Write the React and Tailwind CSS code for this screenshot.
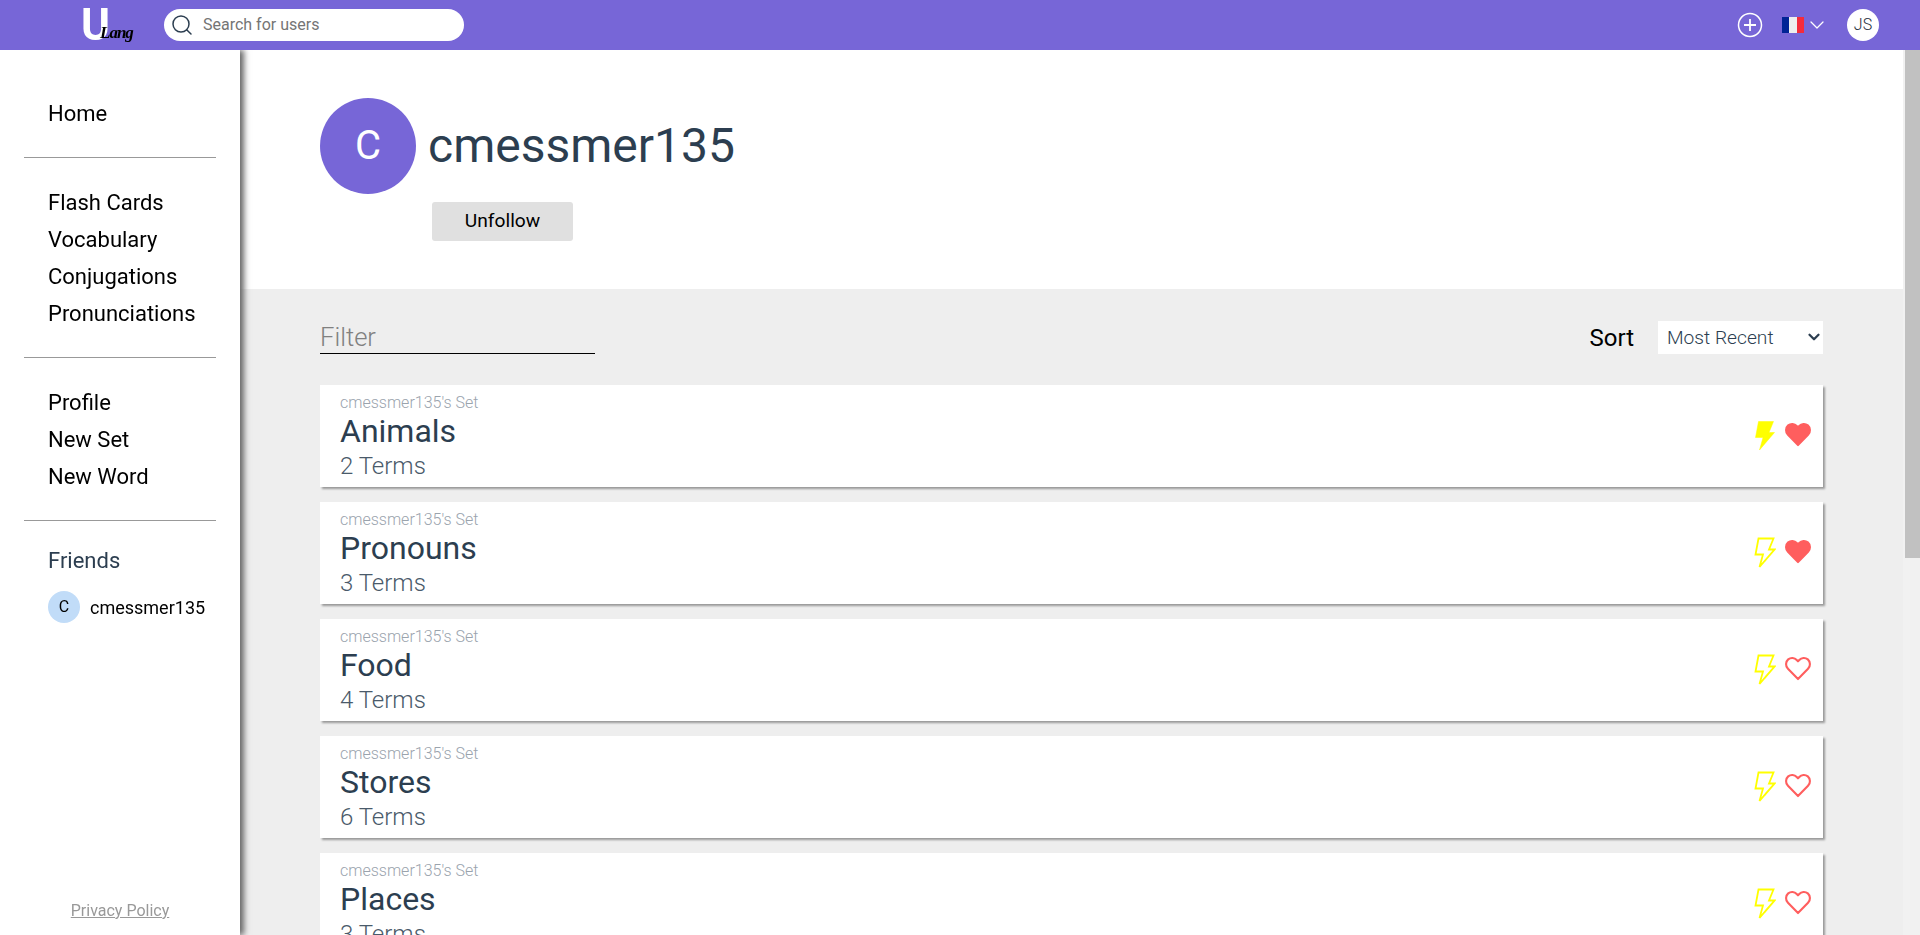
import React from "react";
import { ChevronDown, Search } from "lucide-react";

const sets = [
  { name: "Animals", terms: 2, bolt: true, heart: true },
  { name: "Pronouns", terms: 3, bolt: false, heart: true },
  { name: "Food", terms: 4, bolt: false, heart: false },
  { name: "Stores", terms: 6, bolt: false, heart: false },
  { name: "Places", terms: 3, bolt: false, heart: false },
];

const NavLink = ({ children }) => (
  <a className="block h-[37px] leading-[37px] text-[22px] text-black cursor-pointer">{children}</a>
);

const Bolt = ({ filled }) => (
  <svg width="22" height="32" viewBox="0 0 22 32" fill={filled ? "#ffff00" : "none"} stroke="#ffff00" strokeWidth={filled ? 0.5 : 1.8}>
    <path d="M4.5 1.5h15L15 12.5h5.5L5.5 30 9 17.5H1.5z" />
  </svg>
);

const Heart = ({ filled }) => (
  <svg width="28" height="26" viewBox="0 0 24 22" fill={filled ? "#ff5e5e" : "none"} stroke="#ff5e5e" strokeWidth="1.8" strokeLinejoin="round" className="mb-[4px]">
    <path d="M12 20.5 3.4 11.7C1.1 9.3 1.3 5.6 3.6 3.6c2.2-1.8 5.4-1.5 7.3.5L12 5.3l1.1-1.2c1.9-2 5.1-2.3 7.3-.5 2.3 2 2.5 5.7.2 8.1z" />
  </svg>
);

const SetCard = ({ set }) => (
  <div className="flex items-center justify-between h-[102px] mb-[15px] pl-[20px] pr-[11px] bg-white shadow-[2px_2px_2px_#999]">
    <div>
      <p className="mt-[2px] text-[16px] leading-[19px] font-light text-[#9aa3ad]">cmessmer135's Set</p>
      <h3 className="text-[32px] leading-[39px] text-[#2c3e50]">{set.name}</h3>
      <p className="text-[24px] leading-[30px] font-light text-[#4a5a6a]">{set.terms} Terms</p>
    </div>
    <div className="flex items-center gap-[8px]">
      <Bolt filled={set.bolt} />
      <Heart filled={set.heart} />
    </div>
  </div>
);

export default function App() {
  return (
    <div className="h-[935px] flex flex-col overflow-hidden bg-white font-['Roboto',sans-serif]">
      <header className="relative z-20 flex items-center justify-between h-[50px] shrink-0 bg-[#7766d7]">
        <div className="flex items-center">
          <div className="relative w-[164px] h-[50px]">
            <span className="absolute left-[81px] top-[0px] text-[44px] leading-[50px] font-bold text-white">U</span>
            <span className="absolute left-[100px] top-[23px] text-[17px] leading-[20px] tracking-[-1px] font-bold italic text-black font-['Liberation_Serif',serif]">Lang</span>
          </div>
          <div className="flex items-center w-[300px] h-[32px] rounded-full bg-white pl-[6px]">
            <Search size={24} strokeWidth={1.5} className="text-[#2c3e50]" />
            <span className="ml-[9px] text-[16px] text-[#757575]">Search for users</span>
          </div>
        </div>
        <div className="flex items-center pr-[41px]">
          <svg width="26" height="26" viewBox="0 0 26 26" fill="none" stroke="white" strokeWidth="1.5">
            <circle cx="13" cy="13" r="11.5" />
            <path d="M13 7v12M7 13h12" strokeWidth="1.8" />
          </svg>
          <div className="flex items-center ml-[19px]">
            <div className="flex w-[22px] h-[16px]">
              <span className="w-1/3 bg-[#002395]" />
              <span className="w-1/3 bg-[#eeeeee]" />
              <span className="w-1/3 bg-[#f42b3b]" />
            </div>
            <ChevronDown size={24} strokeWidth={1.25} className="ml-[1px] text-white" />
          </div>
          <div className="flex items-center justify-center ml-[18px] w-[32px] h-[32px] rounded-full bg-white text-[16px] font-light text-[#1f2f40]">JS</div>
        </div>
      </header>
      <div className="flex flex-1 min-h-0">
        <aside className="relative z-10 flex flex-col w-[240px] shrink-0 bg-white shadow-[4px_0_6px_#666] px-[24px] pt-[45px]">
          <div className="pl-[24px]">
            <NavLink>Home</NavLink>
          </div>
          <hr className="mt-[25px] mb-[26px] border-t border-[#999]" />
          <div className="pl-[24px]">
            <NavLink>Flash Cards</NavLink>
            <NavLink>Vocabulary</NavLink>
            <NavLink>Conjugations</NavLink>
            <NavLink>Pronunciations</NavLink>
          </div>
          <hr className="mt-[25px] mb-[26px] border-t border-[#999]" />
          <div className="pl-[24px]">
            <NavLink>Profile</NavLink>
            <NavLink>New Set</NavLink>
            <NavLink>New Word</NavLink>
          </div>
          <hr className="mt-[25px] mb-[26px] border-t border-[#999]" />
          <div className="pl-[24px]">
            <h4 className="text-[22px] leading-[28px] text-[#2c3e50]">Friends</h4>
            <div className="flex items-center mt-[16px]">
              <div className="flex items-center justify-center w-[32px] h-[32px] rounded-full bg-[#c1dcf8] text-[16px] text-black">C</div>
              <span className="ml-[10px] text-[18px] text-black">cmessmer135</span>
            </div>
          </div>
          <a className="mt-auto mb-[12px] text-center text-[16px] underline text-[#999]">Privacy Policy</a>
        </aside>
        <main className="flex-1 min-w-0 overflow-y-scroll bg-[#eeeeee]">
          <section className="h-[239px] bg-white pl-[80px] pt-[48px]">
            <div className="flex items-center">
              <div className="flex items-center justify-center w-[96px] h-[96px] rounded-full bg-[#7766d7] text-[40px] text-white">C</div>
              <h1 className="ml-[12px] text-[48px] text-[#2c3e50]">cmessmer135</h1>
            </div>
            <button className="block ml-[112px] mt-[8px] w-[141px] h-[39px] rounded-[3px] bg-[#e0e0e0] text-[19.2px] text-black">Unfollow</button>
          </section>
          <section className="min-h-[1301px] px-[80px] pt-[31px]">
            <div className="flex items-center justify-between mb-[31px] h-[34px]">
              <div className="w-[275px] h-[34px] border-b border-black text-[25.6px] leading-[35px] font-light text-[#808080]">Filter</div>
              <div className="flex items-center">
                <span className="mt-[2px] text-[24px] text-black">Sort</span>
                <div className="flex items-center justify-between ml-[24px] w-[165px] h-[33px] bg-white pl-[9px]">
                  <span className="mt-[2px] text-[19.2px] font-light text-[#2c3e50]">Most Recent</span>
                  <ChevronDown size={18} strokeWidth={3} className="text-[#2c3e50]" />
                </div>
              </div>
            </div>
            {sets.map((set) => (
              <SetCard key={set.name} set={set} />
            ))}
          </section>
        </main>
        <div className="w-[17px] shrink-0 bg-[#f1f1f1] pl-[2px]">
          <div className="h-[508px] bg-[#c1c1c1]" />
        </div>
      </div>
    </div>
  );
}
